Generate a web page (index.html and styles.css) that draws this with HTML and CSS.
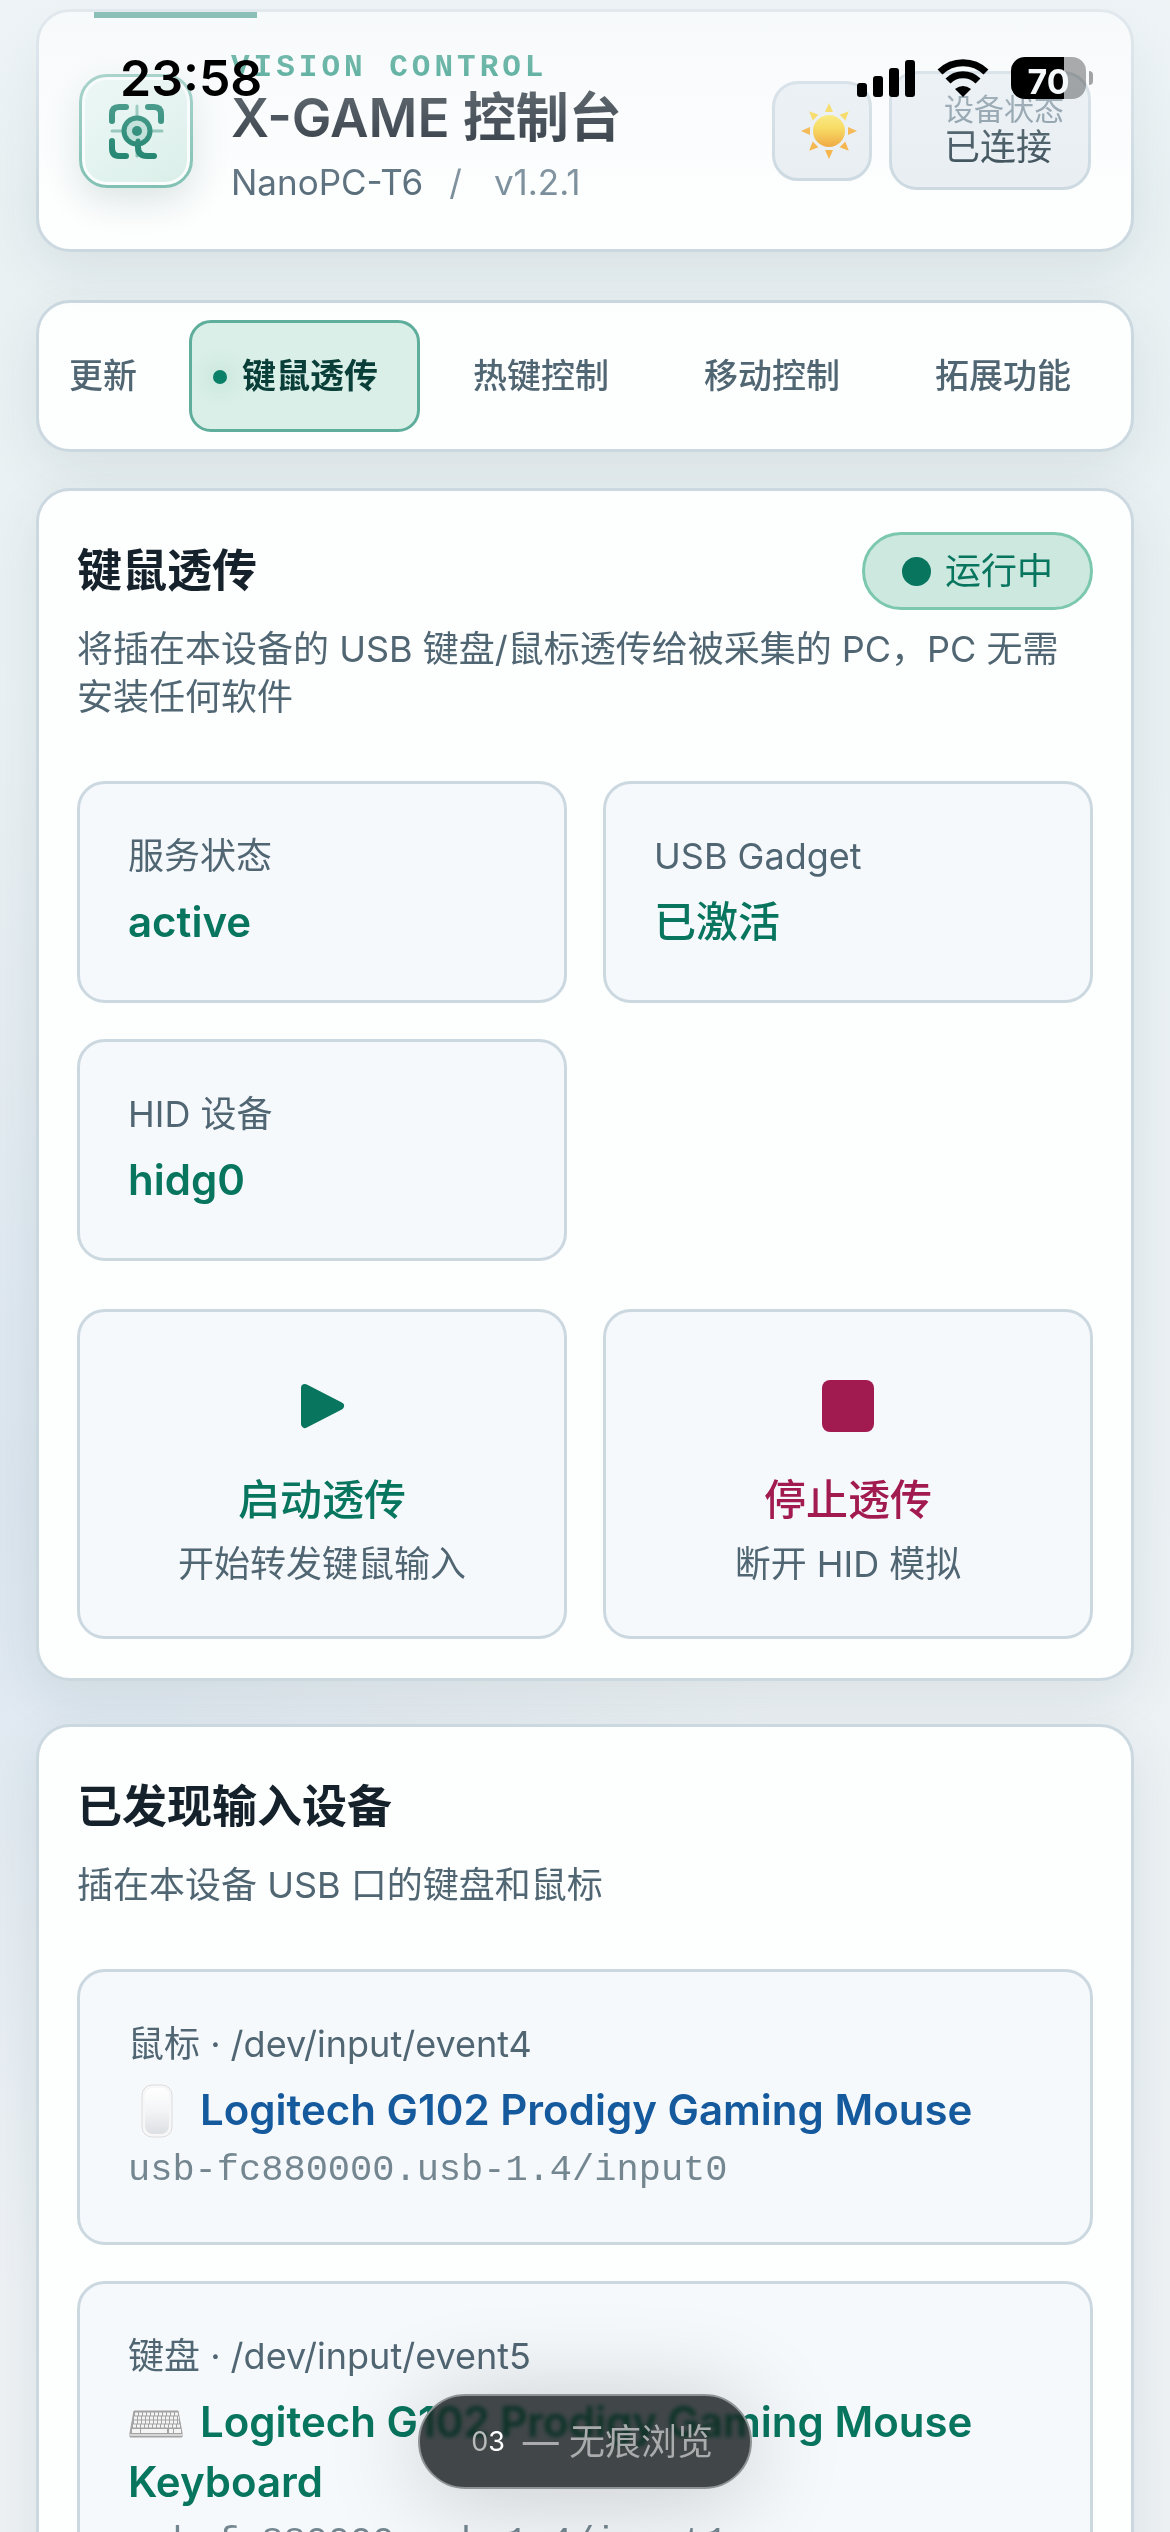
FILE: index.html
```html
<!DOCTYPE html>
<html lang="zh-CN">
<head>
<meta charset="utf-8">
<meta name="viewport" content="width=device-width, initial-scale=1">
<title>X-GAME 控制台</title>
<link rel="stylesheet" href="styles.css">
</head>
<body>
<div class="screen">
  <div class="app">
    <header class="card hero">
      <div class="logo">
        <svg viewBox="0 0 60 60" width="60" height="60" fill="none" stroke="#07775f" stroke-linecap="round" aria-hidden="true">
          <path d="M31 5V55M6 30H56" stroke-width="3" opacity=".45"/>
          <path d="M6 20V13Q6 6 13 6H20M42 6H48Q55 6 55 13V20M6 40V47Q6 55 13 55H20M32 40V46Q32 55 41 55H48" stroke-width="6"/>
          <circle cx="31" cy="30" r="13" stroke-width="5" fill="#b7dcd2"/>
          <circle cx="31" cy="30" r="5" fill="#07775f" stroke="none"/>
          <path d="M32 40V46" stroke-width="5"/>
        </svg>
      </div>
      <div class="brand">
        <div class="eyebrow">VISION CONTROL</div>
        <h1 class="title">X-GAME 控制台</h1>
        <div class="meta"><span>NanoPC-T6</span><span class="sep">/</span><span class="version">v1.2.1</span></div>
      </div>
      <button class="theme" type="button" aria-label="切换主题">
        <svg viewBox="0 0 56 56" width="56" height="56" aria-hidden="true">
          <defs>
            <linearGradient id="sun" x1="0" y1="0" x2="0" y2="1"><stop offset="0" stop-color="#fbe65c"/><stop offset=".4" stop-color="#f9d53c"/><stop offset="1" stop-color="#ef9a22"/></linearGradient>
          </defs>
          <g fill="#f5ab30">
            <path id="ray" d="M28 0L32 9H24Z" fill="#f8d43e"/>
            <use href="#ray" transform="rotate(45 28 28)"/>
            <path d="M28 0L32 9H24Z" transform="rotate(90 28 28)"/>
            <path d="M28 0L32 9H24Z" transform="rotate(135 28 28)"/>
            <path d="M28 0L32 9H24Z" transform="rotate(180 28 28)"/>
            <path d="M28 0L32 9H24Z" transform="rotate(225 28 28)"/>
            <path d="M28 0L32 9H24Z" transform="rotate(270 28 28)"/>
            <use href="#ray" transform="rotate(315 28 28)"/>
          </g>
          <circle cx="28" cy="28" r="16" fill="url(#sun)"/>
        </svg>
      </button>
      <div class="link-state">
        <span class="link-label">设备状态</span>
        <span class="link-value">已连接</span>
      </div>
    </header>

    <nav class="card tabs">
      <button class="tab tab-cut" type="button">更新</button>
      <button class="tab tab-active" type="button">键鼠透传</button>
      <button class="tab" type="button">热键控制</button>
      <button class="tab" type="button">移动控制</button>
      <button class="tab" type="button">拓展功能</button>
    </nav>

    <section class="card panel">
      <div class="panel-head">
        <h2 class="panel-title">键鼠透传</h2>
        <span class="badge"><i class="badge-dot"></i>运行中</span>
      </div>
      <p class="panel-desc">将插在本设备的 USB 键盘/鼠标透传给被采集的 PC，PC 无需安装任何软件</p>
      <div class="grid">
        <div class="tile"><div class="label">服务状态</div><div class="value">active</div></div>
        <div class="tile"><div class="label">USB Gadget</div><div class="value value-cjk">已激活</div></div>
        <div class="tile"><div class="label">HID 设备</div><div class="value">hidg0</div></div>
      </div>
      <div class="grid actions">
        <button class="action action-start" type="button">
          <svg class="action-icon" viewBox="0 0 60 92" width="60" height="92" aria-hidden="true"><path d="M13 28L48 46L13 64Z" fill="currentColor" stroke="currentColor" stroke-width="8" stroke-linejoin="round"/></svg>
          <span class="action-name">启动透传</span>
          <span class="action-note">开始转发键鼠输入</span>
        </button>
        <button class="action action-stop" type="button">
          <svg class="action-icon" viewBox="0 0 60 92" width="60" height="92" aria-hidden="true"><rect x="4" y="20" width="52" height="52" rx="8" fill="currentColor"/></svg>
          <span class="action-name">停止透传</span>
          <span class="action-note">断开 HID 模拟</span>
        </button>
      </div>
    </section>

    <section class="card panel panel-devices">
      <div class="panel-head"><h2 class="panel-title">已发现输入设备</h2></div>
      <p class="panel-desc">插在本设备 USB 口的键盘和鼠标</p>
      <div class="devices">
        <div class="tile">
          <div class="label">鼠标 · /dev/input/event4</div>
          <div class="value value-mouse"><svg class="device-icon" viewBox="0 0 60 54" width="60" height="54" aria-hidden="true">
            <defs><linearGradient id="shell" x1="0" y1="0" x2="0" y2="1"><stop offset="0" stop-color="#fff"/><stop offset=".5" stop-color="#f3f4f6"/><stop offset="1" stop-color="#dcdfe3"/></linearGradient></defs>
            <rect x="14" y="1" width="30" height="52" rx="10" fill="#f7f7f8" stroke="#dcdcdd"/><rect x="17" y="4" width="24" height="46" rx="8" fill="url(#shell)"/></svg>Logitech G102 Prodigy Gaming Mouse</div>
          <div class="port">usb-fc880000.usb-1.4/input0</div>
        </div>
        <div class="tile">
          <div class="label">键盘 · /dev/input/event5</div>
          <div class="value"><svg class="device-icon" viewBox="0 0 60 54" width="60" height="54" aria-hidden="true">
            <path d="M6 15H50L54 37V41H2V37Z" fill="#a3a3a3" stroke="#a3a3a3"/>
            <path d="M7 18H50M6 22H51M6 26H51M5 30H52" stroke="#f4f4f4" stroke-width="3" stroke-dasharray="3 1"/>
            <path d="M4 35H12M13 35H39M41 35H45M46 35H53" stroke="#f4f4f4" stroke-width="4"/>
            <path d="M2 39H54" stroke="#d6d6d6" stroke-width="2"/></svg>Logitech G102 Prodigy Gaming Mouse Keyboard</div>
          <div class="port">usb-fc880000.usb-1.4/input1</div>
        </div>
      </div>
    </section>
  </div>

  <div class="statusbar">
    <time class="clock">23:58</time>
    <div class="indicators">
      <svg viewBox="0 0 58 38" width="58" height="38" aria-hidden="true"><rect y="24" width="10" height="14" rx="3"/><rect x="16" y="17" width="10" height="21" rx="3"/><rect x="32" y="9" width="10" height="29" rx="3"/><rect x="48" y="1" width="10" height="37" rx="3"/></svg>
      <svg viewBox="0 0 52 38" width="52" height="38" aria-hidden="true"><path d="M3 13A33 33 0 0 1 49 13" fill="none" stroke="#000" stroke-width="7"/><path d="M11 22A21 21 0 0 1 41 22" fill="none" stroke="#000" stroke-width="7"/><path d="M26 38L18 30Q26 24 34 30Z"/></svg>
      <div class="battery"><span class="battery-text">70</span></div>
      <i class="battery-tip"></i>
    </div>
  </div>

  <div class="private"><span class="private-num"><span class="private-zero">0</span>3</span><span>— 无痕浏览</span></div>
</div>
</body>
</html>
```
FILE: styles.css
```css
* { box-sizing: border-box; }

body {
  margin: 0;
  font-family: Inter, "Noto Sans CJK SC", sans-serif;
  font-size: 36px;
  line-height: 48px;
  color: #516673;
}

h1, h2, p { margin: 0; }
button { font: inherit; color: inherit; }

.screen {
  position: relative;
  height: 100vh;
  overflow: hidden;
  background:
    radial-gradient(ellipse 800px 800px at 0 1500px, rgba(200, 216, 234, 0.45), rgba(200, 216, 234, 0)),
    linear-gradient(#e9f1f3, #eef2f5);
}

.app { padding: 9px 36px 0; }

.card {
  background: #fdfefe;
  border: 3px solid #cbd8e0;
  border-radius: 34px;
  box-shadow: 0 16px 54px rgba(25, 50, 60, 0.09);
}

/* header */
.hero {
  position: relative;
  display: flex;
  align-items: center;
  height: 243px;
  padding: 0 40px;
  margin-bottom: 48px;
}
.hero::before {
  content: "";
  position: absolute;
  left: 55px;
  top: 0;
  width: 163px;
  height: 6px;
  background: #0a7c66;
}
.logo {
  display: flex;
  align-items: center;
  justify-content: center;
  width: 114px;
  height: 114px;
  border: 3px solid #7dbfb1;
  border-radius: 28px;
  background: linear-gradient(135deg, #eaf8f4, #d8eee7);
  box-shadow: inset 0 0 0 3px #fbfefd, 0 12px 36px rgba(30, 90, 80, 0.16);
}
.brand { flex: 1; margin-left: 38px; padding-bottom: 6px; }
.eyebrow {
  font: 700 31px/36px "Liberation Mono", monospace;
  letter-spacing: 4px;
  color: #0f8a70;
}
.title { font-size: 53px; line-height: 64px; font-weight: 600; color: #17212b; }
.meta { display: flex; margin-top: 8px; font-size: 35px; color: #566b79; }
.sep { margin: 0 32px 0 26px; }
.version, .sep { color: #788c99; }
.theme {
  display: flex;
  align-items: center;
  justify-content: center;
  width: 100px;
  height: 100px;
  padding: 0 0 0 14px;
  border: 3px solid #cbd8e0;
  border-radius: 26px;
  background: #e8eef2;
}
.link-state {
  display: flex;
  flex-direction: column;
  width: 202px;
  height: 119px;
  margin-left: 17px;
  padding: 16px 0 0 52px;
  border: 3px solid #cbd8e0;
  border-radius: 28px;
  background: #e8eef2;
  line-height: 38px;
}
.link-label { font-size: 30px; color: #7b8f9b; }
.link-value { color: #2d424d; }

/* tabs */
.tabs { display: flex; justify-content: flex-end; padding: 17px 18px 17px 0; margin-bottom: 36px; overflow: hidden; }
.tab {
  position: relative;
  flex: none;
  height: 112px;
  width: 231px;
  padding: 0 0 0 50px;
  border: 3px solid transparent;
  border-radius: 22px;
  background: none;
  font-size: 34px;
  font-weight: 500;
  text-align: left;
}
.tab-cut { width: 173px; }
.tab-active { color: #093f38; font-weight: 700; background: #d9efe7; border-color: #5fae9c; }
.tab-active::before {
  content: "";
  position: absolute;
  left: 21px;
  top: 47px;
  width: 14px;
  height: 14px;
  border-radius: 50%;
  background: #0a8069;
  box-shadow: 0 0 24px rgba(10, 128, 105, 0.3);
}

/* panels */
.panel { padding: 41px 38px 39px; margin-bottom: 43px; }
.panel-head { display: flex; align-items: center; justify-content: space-between; min-height: 78px; }
.panel-title { font-size: 45px; line-height: 60px; font-weight: 600; color: #15212b; }
.panel-desc { margin: 15px 0 60px; }
.badge {
  display: flex;
  align-items: center;
  gap: 14px;
  padding: 12px 37px;
  border: 3px solid #7bc8af;
  border-radius: 39px;
  background: #cde9df;
  color: #08755f;
}
.badge-dot { width: 29px; height: 29px; border-radius: 50%; background: #08755f; }

.grid { display: grid; grid-template-columns: 1fr 1fr; gap: 36px; }
.devices { display: flex; flex-direction: column; gap: 36px; }
.tile, .action {
  border: 3px solid #cbd8e0;
  border-radius: 28px;
  background: #f6f9fc;
  padding: 48px;
}
.value {
  margin-top: 12px;
  font-size: 42px;
  line-height: 60px;
  font-weight: 600;
  color: #08755f;
}
.value-cjk { font-weight: 500; }
.value-mouse { color: #165a9e; }
.device-icon { vertical-align: middle; margin: -6px 12px 0 0; }
.port {
  margin-top: 6px;
  font: 37px/48px "Liberation Mono", monospace;
  color: #748791;
}

.actions { margin-top: 48px; }
.action { display: flex; flex-direction: column; align-items: center; cursor: pointer; }
.action-icon { margin-bottom: 18px; }
.action-name { margin-bottom: 10px; font-size: 42px; line-height: 60px; font-weight: 500; }
.action-start { color: #08755f; }
.action-stop { color: #a21b50; }
.action-note { color: #516673; }

/* system status bar over the page */
.statusbar {
  position: absolute;
  inset: 0 0 auto;
  display: flex;
  justify-content: space-between;
  align-items: flex-start;
  height: 200px;
  padding: 48px 77px 0 120px;
  background: linear-gradient(rgba(242, 246, 249, 0.6), rgba(246, 249, 251, 0));
  color: #000;
  pointer-events: none;
}
.clock { font-size: 50px; line-height: 60px; font-weight: 600; }
.indicators { display: flex; align-items: center; height: 60px; }
.indicators svg + svg { margin: 0 22px; }
.battery {
  width: 75px;
  height: 42px;
  border-radius: 14px;
  background: linear-gradient(90deg, #000 53px, rgba(0, 0, 0, 0.32) 53px);
  text-align: center;
}
.battery-text { font-size: 34px; line-height: 42px; font-weight: 700; color: #f4f8fa; }
.battery-tip { width: 4px; height: 14px; margin-left: 3px; border-radius: 0 4px 4px 0; background: rgba(0, 0, 0, 0.35); }

/* private browsing pill */
.private {
  position: absolute;
  left: 50%;
  bottom: 43px;
  transform: translateX(-50%);
  display: flex;
  align-items: center;
  justify-content: flex-end;
  gap: 18px;
  width: 334px;
  height: 95px;
  padding-right: 37px;
  border: 2px solid #8e9494;
  border-radius: 48px;
  background: rgba(18, 22, 23, 0.79);
  backdrop-filter: saturate(2.5) blur(2px);
  box-shadow: 0 8px 100px rgba(0, 0, 0, 0.2);
  color: #a9abac;
  white-space: nowrap;
}
.private-num { font-size: 27px; color: #fff; }
.private-zero { color: #b9bbbb; }
```
